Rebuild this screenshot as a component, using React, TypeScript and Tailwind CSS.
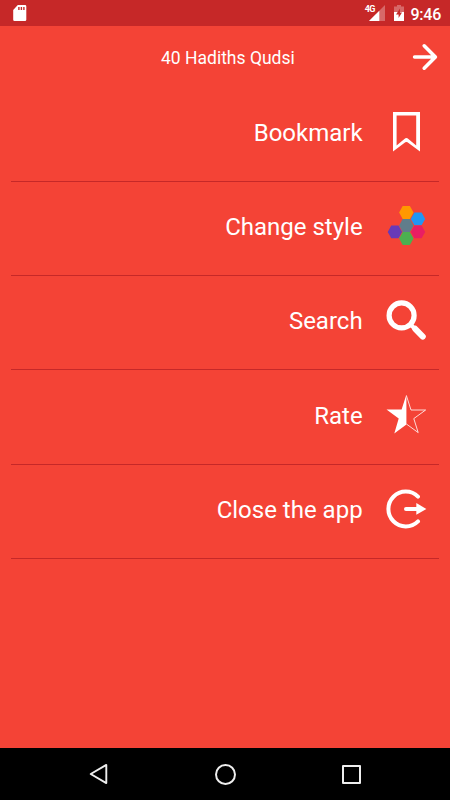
import type { ReactNode } from "react";

type MenuItem = {
  label: string;
  icon: ReactNode;
};

const HEX = "M-7.2 0L-3.6 -6.4H3.6L7.2 0L3.6 6.4H-3.6Z";

const hexagons = [
  { x: 20.3, y: 6.5, fill: "#ff9800" },
  { x: 32, y: 12.9, fill: "#2196f3" },
  { x: 20.3, y: 19.5, fill: "#607d8b" },
  { x: 8.9, y: 25.9, fill: "#673ab7" },
  { x: 32, y: 25.9, fill: "#e91e63" },
  { x: 20.3, y: 32.5, fill: "#4caf50" },
];

const BookmarkIcon = () => (
  <svg viewBox="0 0.9 41 41" className="size-[41px]" fill="#fff">
    <path
      fillRule="evenodd"
      d="M7 .9H34V40.4L21.5 31.2Q20.4 30.4 19.3 31.2L7 40.4ZM10.6 4.4V34.4L18.4 27.8Q20.4 25.8 22.4 27.8L30.2 34.4V4.4Z"
    />
  </svg>
);

const StyleIcon = () => (
  <svg viewBox="0 0 41 41" className="size-[41px]">
    {hexagons.map((hex) => (
      <path
        key={hex.fill}
        d={HEX}
        fill={hex.fill}
        transform={`translate(${hex.x} ${hex.y})`}
      />
    ))}
  </svg>
);

const SearchIcon = () => (
  <svg viewBox="0 0 41 41" className="size-[41px]" fill="none" stroke="#fff">
    <circle cx="15.6" cy="15.4" r="12.5" strokeWidth="5.2" />
    <path d="M24 24L29 29" strokeWidth="4" />
    <path d="M29.2 28.8L36.8 36.6" strokeWidth="6" strokeLinecap="round" />
  </svg>
);

const RateIcon = () => (
  <svg viewBox="0 0.6 41 41" className="size-[41px]">
    <path d="M20.4 .2V30L8.3 39L12.7 24L.5 15.2H15.6Z" fill="#fff" />
    <path
      d="M20.4 1.2L25 15.6H39.6L27.8 24.2L32.2 38.2L20.4 29.6"
      fill="none"
      stroke="#fff"
      strokeWidth=".8"
    />
  </svg>
);

const CloseIcon = () => (
  <svg viewBox="0 0 41 41" className="size-[41px]" fill="none" stroke="#fff">
    <path
      d="M32 7.6A17.4 17.4 0 1 0 32 32.4"
      strokeWidth="4"
      strokeLinecap="round"
    />
    <path d="M20 20H32" strokeWidth="4" strokeLinecap="round" />
    <path d="M30.3 14.1L40.4 20L30.3 25.8Z" fill="#fff" stroke="none" />
  </svg>
);

const menu: MenuItem[] = [
  { label: "Bookmark", icon: <BookmarkIcon /> },
  { label: "Change style", icon: <StyleIcon /> },
  { label: "Search", icon: <SearchIcon /> },
  { label: "Rate", icon: <RateIcon /> },
  { label: "Close the app", icon: <CloseIcon /> },
];

const StatusBar = () => (
  <div className="flex h-[26px] items-center bg-[#c62828] pl-[13px] pr-[9px]">
    <svg viewBox="0 0 14 16" className="h-4 w-3.5">
      <path
        fillRule="evenodd"
        fill="#fff"
        d="M4.8 0H12Q13.3 0 13.3 1.3V14.7Q13.3 16 12 16H1.5Q.2 16 .2 14.7V5ZM5.2 2V5H6.6V2ZM7.7 2V5H9.1V2ZM10.2 2V5H11.6V2Z"
      />
    </svg>
    <div className="ml-auto flex items-center">
      <span className="-mr-1.5 mb-2 text-[9px] font-bold leading-none tracking-[-0.8px]">
        4G
      </span>
      <svg viewBox="0 0 16 16" className="h-4 w-4">
        <path d="M16 0V16H0Z" fill="#fff" fillOpacity=".3" />
        <path d="M10.3 5.7V16H0Z" fill="#fff" />
      </svg>
      <svg viewBox="0 0 10 16" className="ml-[9px] h-4 w-2.5">
        <path d="M3 0H7V1.6H10V7H0V1.6H3Z" fill="#fff" fillOpacity=".3" />
        <path d="M0 7H10V16H0Z" fill="#fff" />
        <path d="M6 3.5L2 9.4H4.6V13L8 7.6H6Z" fill="#c62828" />
      </svg>
      <span className="ml-[7px] pt-[3px] text-base font-medium leading-none tracking-[-0.25px]">
        9:46
      </span>
    </div>
  </div>
);

const Header = () => (
  <header className="flex h-[61px] items-center pl-[161px] pr-3">
    <h1 className="pt-[2px] text-[17.5px] leading-6">40 Hadiths Qudsi</h1>
    <svg
      viewBox="0 0 26 28"
      className="ml-auto h-7 w-[26px]"
      fill="none"
      stroke="#fff"
      strokeWidth="3.6"
      strokeLinecap="round"
      strokeLinejoin="round"
    >
      <path d="M2.6 14H23M12.2 2.8L23.4 14L12.2 25.2" />
    </svg>
  </header>
);

const NavigationBar = () => (
  <nav className="flex h-[52px] items-center justify-between bg-black pl-[89px] pr-[89px]">
    <svg viewBox="0 0 20 22" className="h-[22px] w-5">
      <path
        d="M1.7 11L17.3 1.9V20.1Z"
        fill="none"
        stroke="#eee"
        strokeWidth="1.9"
        strokeLinejoin="round"
      />
    </svg>
    <div className="mr-px size-[21px] rounded-full border-2 border-[#eee]" />
    <div className="size-[19px] rounded-[1px] border-2 border-[#eee]" />
  </nav>
);

const App = () => {
  return (
    <div className="flex h-screen flex-col bg-[#f44336] font-['Roboto',sans-serif] text-white">
      <StatusBar />
      <Header />
      <ul className="flex-1 px-[11px] pt-[0.4px]">
        {menu.map((item) => (
          <li
            key={item.label}
            className="flex h-[94.35px] items-center justify-end gap-[23.4px] border-b border-[#c62828] pb-1 pr-3"
          >
            <span className="pt-px text-2xl">{item.label}</span>
            {item.icon}
          </li>
        ))}
      </ul>
      <NavigationBar />
    </div>
  );
};

export default App;
